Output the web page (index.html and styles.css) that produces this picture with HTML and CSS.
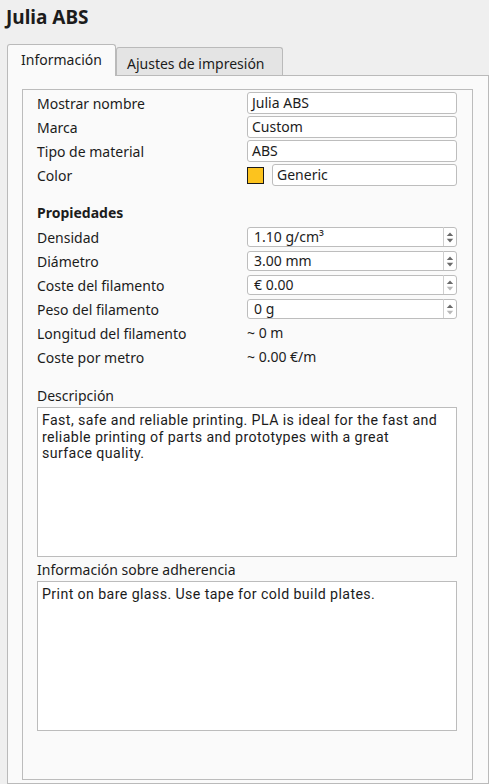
FILE: index.html
```html
<!DOCTYPE html>
<html lang="es">
<head>
<meta charset="utf-8">
<title>Julia ABS</title>
<link rel="stylesheet" href="styles.css">
</head>
<body>
<div class="title">Julia ABS</div>
<div class="tabs">
  <div class="tab tab-active">Información</div>
  <div class="tab">Ajustes de impresión</div>
</div>
<div class="panel">
  <div class="frame">
    <div class="row"><span class="label">Mostrar nombre</span><div class="field">Julia ABS</div></div>
    <div class="row"><span class="label">Marca</span><div class="field">Custom</div></div>
    <div class="row"><span class="label">Tipo de material</span><div class="field">ABS</div></div>
    <div class="row"><span class="label">Color</span><div class="color-cell"><span class="swatch"></span><div class="field field-generic">Generic</div></div></div>

    <div class="row heading">Propiedades</div>
    <div class="row"><span class="label">Densidad</span>
      <div class="spin"><span class="spin-value">1.10 g/cm³</span><span class="spin-buttons"><svg width="13" height="20" viewBox="0 0 13 20"><path class="arr" d="M3 9 L6.5 5 L10 9 Z"/><path class="arr" d="M3 12 L10 12 L6.5 16 Z"/></svg></span></div></div>
    <div class="row"><span class="label">Diámetro</span>
      <div class="spin"><span class="spin-value">3.00 mm</span><span class="spin-buttons"><svg width="13" height="20" viewBox="0 0 13 20"><path class="arr" d="M3 9 L6.5 5 L10 9 Z"/><path class="arr" d="M3 12 L10 12 L6.5 16 Z"/></svg></span></div></div>
    <div class="row"><span class="label">Coste del filamento</span>
      <div class="spin"><span class="spin-value">€ 0.00</span><span class="spin-buttons"><svg width="13" height="20" viewBox="0 0 13 20"><path class="arr" d="M3 9 L6.5 5 L10 9 Z"/><path class="arr arr-off" d="M3 12 L10 12 L6.5 16 Z"/></svg></span></div></div>
    <div class="row"><span class="label">Peso del filamento</span>
      <div class="spin"><span class="spin-value">0 g</span><span class="spin-buttons"><svg width="13" height="20" viewBox="0 0 13 20"><path class="arr" d="M3 9 L6.5 5 L10 9 Z"/><path class="arr arr-off" d="M3 12 L10 12 L6.5 16 Z"/></svg></span></div></div>
    <div class="row"><span class="label">Longitud del filamento</span><span class="value">~ 0 m</span></div>
    <div class="row"><span class="label">Coste por metro</span><span class="value">~ 0.00 €/m</span></div>

    <div class="section-label">Descripción</div>
    <div class="textbox">
      <div class="line">Fast, safe and reliable printing. PLA is ideal for the fast and</div>
      <div class="line">reliable printing of parts and prototypes with a great</div>
      <div class="line">surface quality.</div>
    </div>
    <div class="section-label section-label-2">Información sobre adherencia</div>
    <div class="textbox">
      <div class="line">Print on bare glass. Use tape for cold build plates.</div>
    </div>
  </div>
</div>
</body>
</html>
```
FILE: styles.css
```css
html, body {
  height: 100%;
}
body {
  margin: 0;
  background: #efefef;
  color: #1c1c1c;
  font-family: "Noto Sans", "DejaVu Sans", sans-serif;
  font-size: 14px;
  overflow: hidden;
  display: flex;
  flex-direction: column;
}
.title {
  font-size: 19px;
  font-weight: bold;
  line-height: 24px;
  margin: 5px 0 0 6px;
  height: 24px;
}
.tabs {
  display: flex;
  align-items: flex-end;
  margin: 15px 0 0 7px;
  height: 31px;
}
.tab {
  box-sizing: border-box;
  height: 28px;
  padding: 2px 17px 0 10px;
  border: 1px solid #bababa;
  border-bottom: none;
  border-radius: 3px 3px 0 0;
  background: #e4e4e4;
  line-height: 28px;
}
.tab-active {
  height: 32px;
  margin-bottom: -1px;
  background: #fafafa;
  position: relative;
  z-index: 1;
  width: 109px;
  padding: 0 0 0 13px;
  line-height: 30px;
}
.panel {
  flex: 1;
  box-sizing: border-box;
  margin-left: 7px;
  border: 1px solid #bababa;
  background: #fafafa;
  padding: 13px 15px 0 14px;
}
.frame {
  border: 1px solid #bcbcbc;
  padding: 1px 15px 48px 14px;
}
.row {
  display: grid;
  grid-template-columns: 210px 210px;
  height: 24px;
  align-items: center;
}
.heading {
  display: block;
  line-height: 24px;
  font-weight: bold;
  margin-top: 14px;
}
.field {
  box-sizing: border-box;
  height: 22px;
  line-height: 20px;
  border: 1px solid #bdbdbd;
  border-radius: 3px;
  background: #fff;
  padding: 0 4px;
  white-space: nowrap;
}
.color-cell {
  display: flex;
  align-items: center;
  gap: 8px;
}
.swatch {
  box-sizing: border-box;
  width: 17px;
  height: 17px;
  border: 1px solid #1a1a1a;
  background: #fcc31e;
}
.field-generic {
  flex: 1;
}
.spin {
  box-sizing: border-box;
  height: 20px;
  display: flex;
  border: 1px solid #bdbdbd;
  border-radius: 3px;
  background: #fff;
}
.spin-value {
  flex: 1;
  line-height: 18px;
  padding-left: 6px;
}
.spin-buttons {
  width: 12px;
  border-left: 1px solid #cfcfcf;
  display: flex;
  margin-top: -1px;
}
.arr {
  fill: #6a6a6a;
}
.arr-off {
  fill: #b8b8b8;
}
.value {
  line-height: 24px;
}
.section-label {
  margin-top: 17px;
  line-height: 20px;
  margin-bottom: 1px;
}
.section-label-2 {
  margin-top: 3px;
}
.textbox {
  box-sizing: border-box;
  height: 150px;
  border: 1px solid #bcbcbc;
  background: #fff;
  padding: 4px 4px;
  font-family: Roboto, "Noto Sans", sans-serif;
  font-size: 14.2px;
  letter-spacing: 0.4px;
}
.line {
  height: 16.7px;
  line-height: 16.7px;
  white-space: nowrap;
}
```
